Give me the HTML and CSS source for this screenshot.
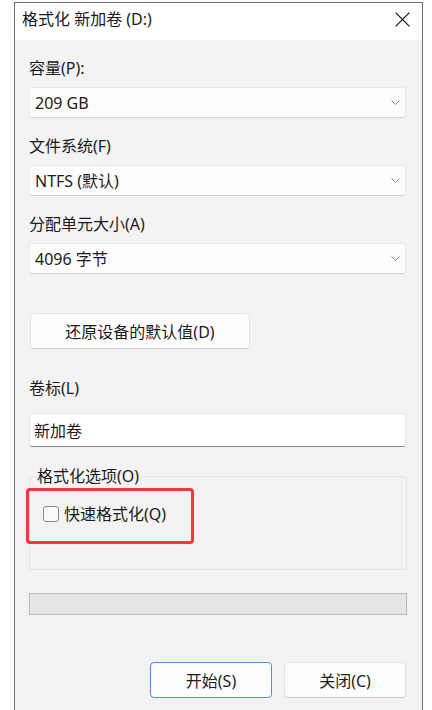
FILE: index.html
```html
<!DOCTYPE html>
<html lang="zh-CN">
<head>
  <meta charset="UTF-8">
  <meta name="viewport" content="width=device-width, initial-scale=1.0">
  <title>格式化 新加卷 (D:)</title>
  <link rel="stylesheet" href="styles.css">
</head>
<body>
  <div class="dialog">
    <div class="titlebar">
      <span class="title">格式化 新加卷 (D:)</span>
      <button class="close" aria-label="关闭">
        <svg width="15" height="15" viewBox="0 0 15 15">
          <path d="M0.6 0.6 L14.4 14.4 M14.4 0.6 L0.6 14.4" stroke="#1b1b1b" stroke-width="1.3" fill="none"/>
        </svg>
      </button>
    </div>
    <div class="content">
      <div class="field">
        <label class="field-label">容量(P):</label>
        <div class="select">
          <span>209 GB</span>
          <svg class="chevron" width="9" height="5" viewBox="0 0 9 5"><polyline points="0.5,0.5 4.5,4.5 8.5,0.5" stroke="#8a8a8a" stroke-width="1" fill="none"/></svg>
        </div>
      </div>
      <div class="field">
        <label class="field-label">文件系统(F)</label>
        <div class="select">
          <span>NTFS (默认)</span>
          <svg class="chevron" width="9" height="5" viewBox="0 0 9 5"><polyline points="0.5,0.5 4.5,4.5 8.5,0.5" stroke="#8a8a8a" stroke-width="1" fill="none"/></svg>
        </div>
      </div>
      <div class="field">
        <label class="field-label">分配单元大小(A)</label>
        <div class="select">
          <span>4096 字节</span>
          <svg class="chevron" width="9" height="5" viewBox="0 0 9 5"><polyline points="0.5,0.5 4.5,4.5 8.5,0.5" stroke="#8a8a8a" stroke-width="1" fill="none"/></svg>
        </div>
      </div>

      <button class="btn btn-restore">还原设备的默认值(D)</button>

      <div class="field field-volume">
        <label class="field-label">卷标(L)</label>
        <div class="textbox">新加卷</div>
      </div>

      <fieldset class="options">
        <legend>格式化选项(O)</legend>
        <div class="highlight">
          <label class="check"><span class="checkbox"></span>快速格式化(Q)</label>
        </div>
      </fieldset>

      <div class="progress"></div>

      <div class="actions">
        <button class="btn btn-primary">开始(S)</button>
        <button class="btn">关闭(C)</button>
      </div>
    </div>
  </div>
</body>
</html>
```

FILE: styles.css
```css
* {
  margin: 0;
  padding: 0;
  box-sizing: border-box;
}

body {
  background-color: #fff;
  font-family: "Noto Sans", "Noto Sans CJK SC", sans-serif;
  font-size: 16px;
  color: #1b1b1b;
}

.dialog {
  width: 409px;
  height: 708px;
  margin: 2px 0 0 14px;
  border: 1px solid #707070;
  border-bottom: none;
  background-color: #f3f3f3;
}

.titlebar {
  height: 37px;
  display: flex;
  align-items: center;
  justify-content: space-between;
  padding: 0 12px 5px 7px;
  background-color: #fff;
}

.title {
  line-height: 20px;
}

.close {
  display: flex;
  border: none;
  background: none;
}

.content {
  padding: 18px 16px 0 14px;
}

.field + .field {
  margin-top: 18px;
}

.field-label {
  display: block;
  line-height: 20px;
}

.select {
  height: 31px;
  margin-top: 9px;
  display: flex;
  align-items: center;
  justify-content: space-between;
  padding: 0 5px 0 5px;
  background-color: #fdfdfd;
  border: 1px solid #e9e9e9;
  border-bottom-color: #d2d2d2;
  border-radius: 3px;
  line-height: 20px;
}

.btn {
  height: 36px;
  font-family: inherit;
  font-size: 16px;
  color: #1b1b1b;
  background-color: #fdfdfd;
  border: 1px solid #e3e3e3;
  border-bottom-color: #cdcdcd;
  border-radius: 4px;
}

.btn-restore {
  display: block;
  width: 220px;
  margin: 39px 0 0 1px;
}

.field.field-volume {
  margin-top: 29px;
}

.textbox {
  height: 34px;
  margin-top: 15px;
  display: flex;
  align-items: center;
  padding-left: 4px;
  background-color: #fff;
  border: 1px solid #e6e6e6;
  border-bottom-color: #8e8e8e;
  border-radius: 3px;
}

.options {
  margin: 19px -1px 0 0;
  padding: 2px 0 25px 0;
  border: 1px solid #e4e4e4;
  border-radius: 2px;
}

.options legend {
  margin-left: 5px;
  padding: 0 2px;
  line-height: 20px;
}

.highlight {
  width: 168px;
  height: 56px;
  margin-left: -4px;
  display: flex;
  align-items: center;
  padding: 0 0 4px 14px;
  border: 3px solid #ee3a3a;
  border-radius: 4px;
}

.check {
  display: flex;
  align-items: center;
  line-height: 20px;
}

.checkbox {
  width: 16px;
  height: 16px;
  margin-right: 5px;
  background-color: #f9f9f9;
  border: 1px solid #8b8b8b;
  border-radius: 3px;
}

.progress {
  height: 22px;
  margin: 23px -1px 0 0;
  background-color: #e6e6e6;
  border: 1px solid #bcbcbc;
}

.actions {
  margin-top: 47px;
  display: flex;
  justify-content: flex-end;
  gap: 12px;
}

.actions .btn {
  width: 122px;
}

.btn-primary {
  border-color: #4a90d9;
}
```
